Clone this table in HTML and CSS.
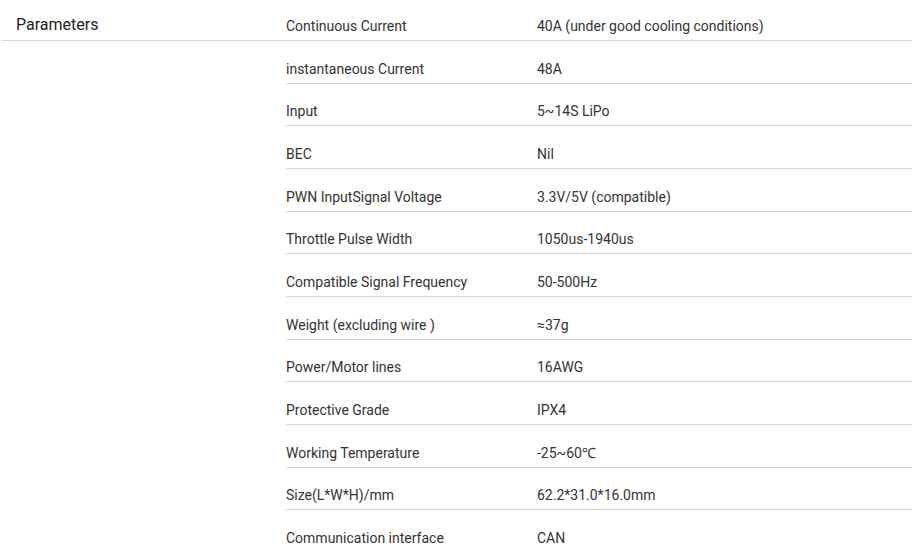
FILE: index.html
```html
<!DOCTYPE html>
<html lang="en">
<head>
<meta charset="utf-8">
<title>Parameters</title>
<link rel="stylesheet" href="styles.css">
</head>
<body>
<section class="spec">
  <h2 class="spec-title">Parameters</h2>
  <div class="spec-table">
    <div class="spec-row"><div class="spec-key">Continuous Current</div><div class="spec-val">40A (under good cooling conditions)</div></div>
    <div class="spec-row"><div class="spec-key">instantaneous Current</div><div class="spec-val">48A</div></div>
    <div class="spec-row"><div class="spec-key">Input</div><div class="spec-val">5~14S LiPo</div></div>
    <div class="spec-row"><div class="spec-key">BEC</div><div class="spec-val">Nil</div></div>
    <div class="spec-row"><div class="spec-key">PWN InputSignal Voltage</div><div class="spec-val">3.3V/5V (compatible)</div></div>
    <div class="spec-row"><div class="spec-key">Throttle Pulse Width</div><div class="spec-val">1050us-1940us</div></div>
    <div class="spec-row"><div class="spec-key">Compatible Signal Frequency</div><div class="spec-val">50-500Hz</div></div>
    <div class="spec-row"><div class="spec-key">Weight (excluding wire )</div><div class="spec-val">≈37g</div></div>
    <div class="spec-row"><div class="spec-key">Power/Motor lines</div><div class="spec-val">16AWG</div></div>
    <div class="spec-row"><div class="spec-key">Protective Grade</div><div class="spec-val">IPX4</div></div>
    <div class="spec-row"><div class="spec-key">Working Temperature</div><div class="spec-val">-25~60℃</div></div>
    <div class="spec-row"><div class="spec-key">Size(L*W*H)/mm</div><div class="spec-val">62.2*31.0*16.0mm</div></div>
    <div class="spec-row"><div class="spec-key">Communication interface</div><div class="spec-val">CAN</div></div>
  </div>
</section>
</body>
</html>
```
FILE: styles.css
```css
html {
  overflow: hidden;
}

body {
  margin: 0;
  background: #ffffff;
  font-family: Roboto, "Liberation Sans", sans-serif;
  color: #333333;
}

.spec {
  display: grid;
  grid-template-columns: 285px 1fr;
  align-items: start;
  margin-left: 1px;
}

.spec-title {
  margin: 0;
  padding: 15px 0 5px 15px;
  font-size: 16px;
  line-height: 20px;
  font-weight: 400;
  color: #222222;
  border-bottom: 1px solid #d6d6d6;
}

.spec-table {
  display: flex;
  flex-direction: column;
}

.spec-row {
  display: grid;
  grid-template-columns: 251px 1fr;
  padding: 17.67px 0 4px;
  font-size: 14px;
  line-height: 20px;
  border-bottom: 1px solid #d6d6d6;
}

.spec-row:first-child {
  padding-top: 16px;
}

.spec-key,
.spec-val {
  white-space: nowrap;
}
```
